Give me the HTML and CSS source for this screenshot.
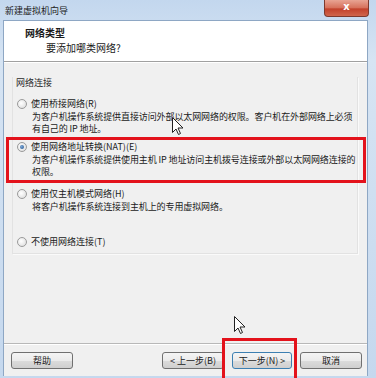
FILE: index.html
```html
<!DOCTYPE html>
<html lang="zh-CN">
<head>
    <meta charset="UTF-8">
    <meta name="viewport" content="width=device-width, initial-scale=1.0">
    <title>新建虚拟机向导</title>
    <link rel="stylesheet" href="styles.css">
</head>
<body>

    <div class="window">
        <!-- 标题栏 -->
        <div class="titlebar">
            <span class="title">新建虚拟机向导</span>
            <span class="close">x</span>
        </div>

        <div class="client">
            <!-- 页头 -->
            <div class="header">
                <div class="header-title">网络类型</div>
                <div class="header-sub">要添加哪类网络?</div>
            </div>

            <!-- 网络连接选项 -->
            <div class="body">
                <div class="group">
                    <div class="group-label">网络连接</div>

                    <div class="option opt-bridge">
                        <div class="option-title"><span class="radio"></span>使用桥接网络(R)</div>
                        <div class="option-desc">为客户机操作系统提供直接访问外部以太网网络的权限。客户机在外部网络上必须<br>有自己的 IP 地址。</div>
                    </div>

                    <div class="option opt-nat marked">
                        <div class="option-title"><span class="radio checked"></span>使用网络地址转换(NAT)(E)</div>
                        <div class="option-desc">为客户机操作系统提供使用主机 IP 地址访问主机拨号连接或外部以太网网络连接的<br>权限。</div>
                    </div>

                    <div class="option opt-host">
                        <div class="option-title"><span class="radio"></span>使用仅主机模式网络(H)</div>
                        <div class="option-desc">将客户机操作系统连接到主机上的专用虚拟网络。</div>
                    </div>

                    <div class="option opt-none">
                        <div class="option-title"><span class="radio"></span>不使用网络连接(T)</div>
                    </div>
                </div>
            </div>

            <!-- 按钮 -->
            <div class="footer">
                <button class="btn">帮助</button>
                <div class="footer-right">
                    <button class="btn">&lt; 上一步(B)</button>
                    <button class="btn default">下一步(N) &gt;</button>
                    <button class="btn">取消</button>
                </div>
            </div>
        </div>

        <!-- 标注框 -->
        <div class="mark-next"></div>

        <!-- 鼠标指针 -->
        <svg class="cursor cursor-a" width="12" height="19" viewBox="0 0 12 19">
            <path d="M0.5 0.5 L0.5 15.5 L4 12 L6.5 17.5 L8.5 16.5 L6 11 L11 11 Z" fill="#fff" stroke="#222" stroke-width="1"/>
        </svg>
        <svg class="cursor cursor-b" width="12" height="19" viewBox="0 0 12 19">
            <path d="M0.5 0.5 L0.5 15.5 L4 12 L6.5 17.5 L8.5 16.5 L6 11 L11 11 Z" fill="#fff" stroke="#222" stroke-width="1"/>
        </svg>
    </div>

</body>
</html>
```

FILE: styles.css
```css
body {
    margin: 0;
    padding: 0;
    font-family: "Noto Sans CJK SC", "DejaVu Sans", sans-serif;
    font-size: 9px;
    color: #1a1a1a;
    background-color: #c9dbef;
    overflow: hidden;
}

.window {
    position: relative;
    width: 376px;
    height: 378px;
    box-sizing: border-box;
    padding: 0 8px 2px 3px;
    background: linear-gradient(to bottom, #c3d7ee, #d6e4f3 60px, #c5d8ee);
    display: flex;
    flex-direction: column;
    overflow: hidden;
}

.titlebar {
    height: 20px;
    display: flex;
    align-items: center;
    justify-content: space-between;
}

.title {
    margin-left: 2px;
    color: #222;
}

.close {
    width: 43px;
    height: 16px;
    margin-top: -4px;
    margin-right: -1px;
    border: 1px solid #7d3a2e;
    border-top: none;
    border-radius: 0 0 4px 4px;
    background: linear-gradient(to bottom, #e8a493, #d6705a 50%, #c2412b 55%, #d0664c);
    color: #fff;
    font-family: "DejaVu Sans", sans-serif;
    font-weight: bold;
    font-size: 10px;
    text-align: center;
    line-height: 14px;
}

.client {
    flex: 1;
    display: flex;
    flex-direction: column;
    background-color: #f0f0f0;
    border: 1px solid #8ea7c4;
    border-bottom: none;
}

.header {
    height: 41px;
    background-color: #fff;
    border-bottom: 1px solid #a0a0a0;
    box-shadow: 0 1px 0 #fff;
    padding-left: 21px;
    box-sizing: border-box;
}

.header-title {
    font-weight: bold;
    font-size: 10px;
    margin-top: 5px;
    line-height: 13px;
}

.header-sub {
    margin-left: 21px;
    margin-top: 2px;
    font-size: 10px;
    line-height: 13px;
}

.body {
    flex: 1;
    padding: 15px 8px 0 8px;
}

.group {
    height: 176px;
    border: 1px solid #e2e2e2;
    border-top: none;
    box-shadow: 1px 1px 0 #fafafa;
    padding-left: 4px;
    margin-right: 1px;
}

.group-label {
    line-height: 12px;
    margin-left: -1px;
    color: #2a2a2a;
}

.option {
    position: relative;
}

.option-title {
    display: flex;
    align-items: center;
    line-height: 12px;
}

.option-desc {
    margin-left: 15px;
    margin-top: 1px;
    line-height: 12px;
    white-space: nowrap;
    letter-spacing: -0.1px;
}

.opt-bridge {
    margin-top: 9px;
}

.opt-nat {
    margin-top: 6px;
}

.opt-host {
    margin-top: 10px;
}

.opt-none {
    margin-top: 23px;
}

.option.marked::after {
    content: '';
    position: absolute;
    left: -11px;
    right: -9px;
    top: -4px;
    bottom: -5px;
    border: 3px solid #e3121b;
}

.radio {
    display: inline-block;
    width: 8px;
    height: 8px;
    margin-right: 4px;
    border: 1px solid #9a9a9a;
    border-radius: 50%;
    background: radial-gradient(circle at 40% 40%, #ffffff, #d8d8d8);
    box-sizing: content-box;
    position: relative;
}

.radio.checked::after {
    content: '';
    position: absolute;
    left: 2px;
    top: 2px;
    width: 4px;
    height: 4px;
    border-radius: 50%;
    background: radial-gradient(circle at 40% 40%, #7aa6d6, #1d4f8a);
}

.footer {
    height: 33px;
    border-top: 1px solid #b8b8b8;
    box-shadow: inset 0 1px 0 #fff;
    display: flex;
    align-items: flex-start;
    justify-content: space-between;
    padding: 8px 5px 0 7px;
    box-sizing: border-box;
}

.footer-right {
    display: flex;
    gap: 8px;
}

.btn {
    display: block;
    width: 62px;
    height: 17px;
    padding: 0;
    font-family: inherit;
    font-size: 9px;
    color: #1a1a1a;
    border: 1px solid #707070;
    border-radius: 3px;
    background: linear-gradient(to bottom, #f4f4f4, #ebebeb 50%, #dcdcdc 51%, #cfcfcf);
    line-height: 15px;
}

.btn.default {
    width: 60px;
    border-color: #3c7fb1;
}

.mark-next {
    position: absolute;
    left: 222px;
    top: 338px;
    width: 75px;
    height: 48px;
    box-sizing: border-box;
    border: 3px solid #e3121b;
}

.cursor {
    position: absolute;
}

.cursor-a {
    left: 172px;
    top: 117px;
}

.cursor-b {
    left: 234px;
    top: 316px;
}
```
